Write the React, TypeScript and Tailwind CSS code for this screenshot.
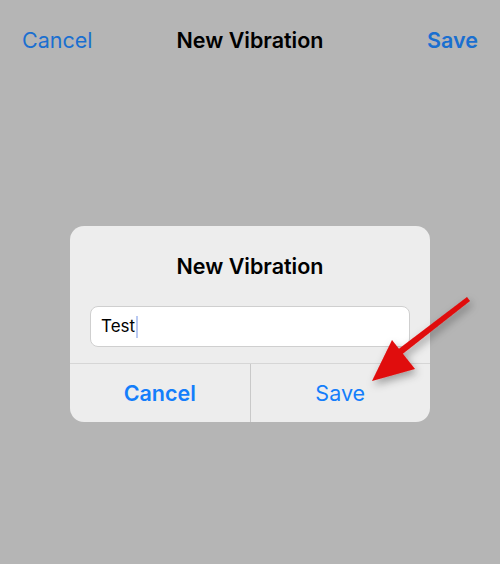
import React from 'react';

const font = { fontFamily: '"Inter", "Liberation Sans", sans-serif' };

const Arrow: React.FC = () => (
  <svg
    className="absolute left-[360px] top-[290px] pointer-events-none"
    width="120"
    height="105"
    viewBox="360 290 120 105"
  >
    <defs>
      <filter id="sh" x="-30%" y="-30%" width="160%" height="160%">
        <feDropShadow dx="2" dy="4" stdDeviation="4" floodColor="#000" floodOpacity="0.35" />
      </filter>
    </defs>
    <g filter="url(#sh)" fill="#e00b0b">
      <path d="M467 297 L470 301 L400 356 L396 351 Z" />
      <path d="M372 381 L392 340 L415 369 Z" />
    </g>
  </svg>
);

const App: React.FC = () => {
  return (
    <div className="relative w-[500px] h-[564px] bg-[#b5b5b5] overflow-hidden" style={font}>
      {/* nav bar */}
      <div className="grid grid-cols-[1fr_auto_1fr] items-center h-[80px] px-[22px] text-[21.5px]">
        <span className="text-[#1a6fd0]">Cancel</span>
        <span className="font-semibold text-black">New Vibration</span>
        <span className="font-semibold text-[#1a6fd0] text-right">Save</span>
      </div>

      {/* alert */}
      <div className="flex justify-center pt-[146px]">
        <div className="w-[360px] rounded-[14px] bg-[#ededed] overflow-hidden">
          <div className="pt-[26px] pb-[26px] text-center text-[21.5px] font-semibold text-black leading-[28px]">
            New Vibration
          </div>
          <div className="px-[20px] pb-[16px]">
            <div className="flex items-center h-[41px] rounded-[8px] bg-white border border-[#cfcfcf] px-[10px] text-[17px] text-black">
              Test
              <span className="inline-block w-[2px] h-[22px] bg-[#b9c9f2] ml-[1px]" />
            </div>
          </div>
          <div className="flex border-t border-[#d6d6d6] h-[59px] text-[21.5px]">
            <div className="flex-1 flex items-center justify-center font-semibold text-[#147efb] border-r border-[#c9c9c9]">
              Cancel
            </div>
            <div className="flex-1 flex items-center justify-center text-[#147efb]">Save</div>
          </div>
        </div>
      </div>

      <Arrow />
    </div>
  );
};

export default App;
